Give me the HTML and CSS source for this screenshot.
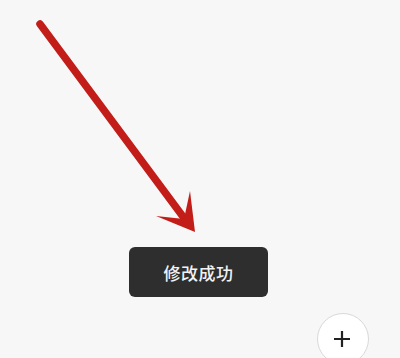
FILE: index.html
```html
<!DOCTYPE html>
<html lang="zh">
<head>
<meta charset="utf-8">
<link rel="stylesheet" href="styles.css">
</head>
<body>
<div class="page">
  <svg class="arrow" width="400" height="358" viewBox="0 0 400 358">
    <line x1="40" y1="24" x2="184" y2="218" stroke="#c21d18" stroke-width="7.5" stroke-linecap="round"/>
    <polygon points="195,232 190,191 184,219 156,216" fill="#c21d18"/>
  </svg>
  <div class="toast">修改成功</div>
  <div class="fab">
    <svg width="18" height="18" viewBox="0 0 18 18"><path d="M9 1v16M1 9h16" stroke="#222" stroke-width="2.2" fill="none"/></svg>
  </div>
</div>
</body>
</html>
```
FILE: styles.css
```css
html, body { margin: 0; padding: 0; }
body { background: #f7f7f7; font-family: "Noto Sans CJK SC", "Noto Sans", sans-serif; }
.page {
  position: relative;
  width: 400px;
  height: 358px;
  overflow: hidden;
  background: #f7f7f7;
  display: flex;
  flex-direction: column;
  align-items: flex-start;
  padding: 247px 0 0 129px;
  box-sizing: border-box;
}
.arrow { position: absolute; left: 0; top: 0; }
.toast {
  width: 139px;
  height: 50px;
  border-radius: 6px;
  background: #2e2e2e;
  color: #f2f2f2;
  font-size: 17px;
  font-weight: 500;
  display: flex;
  align-items: center;
  justify-content: center;
  letter-spacing: 0.5px;
}
.fab {
  position: absolute;
  left: 317px;
  top: 313px;
  width: 52px;
  height: 52px;
  box-sizing: border-box;
  border-radius: 50%;
  background: #fff;
  border: 1.5px solid #d9d9d9;
  display: flex;
  align-items: center;
  justify-content: center;
}
.fab svg { margin-top: -1px; margin-left: -2px; }
```
